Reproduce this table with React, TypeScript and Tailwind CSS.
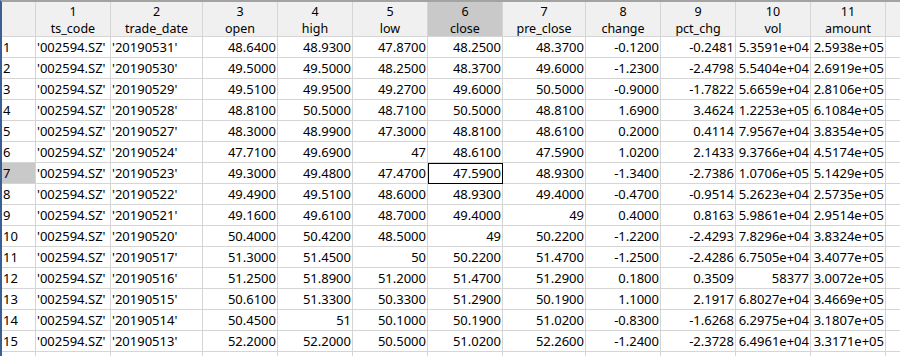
const columns = [
  { n: "1", name: "ts_code", w: "w-[75px]" },
  { n: "2", name: "trade_date", w: "w-[92px]" },
  { n: "3", name: "open", w: "w-[75px]" },
  { n: "4", name: "high", w: "w-[75px]" },
  { n: "5", name: "low", w: "w-[75px]" },
  { n: "6", name: "close", w: "w-[75px]" },
  { n: "7", name: "pre_close", w: "w-[83px]" },
  { n: "8", name: "change", w: "w-[75px]" },
  { n: "9", name: "pct_chg", w: "w-[75px]" },
  { n: "10", name: "vol", w: "w-[75px]" },
  { n: "11", name: "amount", w: "w-[75px]" },
];

const rows: string[][] = [
  ["'20190531'", "48.6400", "48.9300", "47.8700", "48.2500", "48.3700", "-0.1200", "-0.2481", "5.3591e+04", "2.5938e+05"],
  ["'20190530'", "49.5000", "49.5000", "48.2500", "48.3700", "49.6000", "-1.2300", "-2.4798", "5.5404e+04", "2.6919e+05"],
  ["'20190529'", "49.5100", "49.9500", "49.2700", "49.6000", "50.5000", "-0.9000", "-1.7822", "5.6659e+04", "2.8106e+05"],
  ["'20190528'", "48.8100", "50.5000", "48.7100", "50.5000", "48.8100", "1.6900", "3.4624", "1.2253e+05", "6.1084e+05"],
  ["'20190527'", "48.3000", "48.9900", "47.3000", "48.8100", "48.6100", "0.2000", "0.4114", "7.9567e+04", "3.8354e+05"],
  ["'20190524'", "47.7100", "49.6900", "47", "48.6100", "47.5900", "1.0200", "2.1433", "9.3766e+04", "4.5174e+05"],
  ["'20190523'", "49.3000", "49.4800", "47.4700", "47.5900", "48.9300", "-1.3400", "-2.7386", "1.0706e+05", "5.1429e+05"],
  ["'20190522'", "49.4900", "49.5100", "48.6000", "48.9300", "49.4000", "-0.4700", "-0.9514", "5.2623e+04", "2.5735e+05"],
  ["'20190521'", "49.1600", "49.6100", "48.7000", "49.4000", "49", "0.4000", "0.8163", "5.9861e+04", "2.9514e+05"],
  ["'20190520'", "50.4000", "50.4200", "48.5000", "49", "50.2200", "-1.2200", "-2.4293", "7.8296e+04", "3.8324e+05"],
  ["'20190517'", "51.3000", "51.4500", "50", "50.2200", "51.4700", "-1.2500", "-2.4286", "6.7505e+04", "3.4077e+05"],
  ["'20190516'", "51.2500", "51.8900", "51.2000", "51.4700", "51.2900", "0.1800", "0.3509", "58377", "3.0072e+05"],
  ["'20190515'", "50.6100", "51.3300", "50.3300", "51.2900", "50.1900", "1.1000", "2.1917", "6.8027e+04", "3.4669e+05"],
  ["'20190514'", "50.4500", "51", "50.1000", "50.1900", "51.0200", "-0.8300", "-1.6268", "6.2975e+04", "3.1807e+05"],
  ["'20190513'", "52.2000", "52.2000", "50.5000", "51.0200", "52.2600", "-1.2400", "-2.3728", "6.4961e+04", "3.3171e+05"],
];

const selRow = 6;
const selCol = 5;

function App() {
  return (
    <div
      className="w-[900px] h-[356px] overflow-hidden bg-white border-l-2 border-t-2 border-l-[#3a5f94] border-t-[#a3a3a3] text-[13px] text-black"
      style={{ fontFamily: '"Noto Sans", "Liberation Sans", sans-serif' }}
    >
      {/* header */}
      <div className="flex h-[35px] bg-[#f0f0f0]">
        <div className="w-[34px] shrink-0 border-r border-b border-[#d5d5d5]" />
        {columns.map((c, i) => (
          <div
            key={c.n}
            className={`${c.w} shrink-0 border-r border-b border-[#d5d5d5] pt-[1px] text-center text-[12.5px] leading-[17px] ${
              i === selCol ? "bg-[#c9c9c9]" : ""
            }`}
          >
            <div>{c.n}</div>
            <div>{c.name}</div>
          </div>
        ))}
        <div className="w-[60px] shrink-0 border-b border-[#d5d5d5]" />
      </div>

      {/* rows */}
      {[...rows, null].map((r, ri) => (
        <div key={ri} className="flex h-[21px] leading-[20px]">
          <div
            className={`w-[34px] shrink-0 border-r border-b border-[#d5d5d5] pl-[1px] ${
              ri === selRow ? "bg-[#c9c9c9]" : ""
            }`}
          >
            {r ? ri + 1 : ""}
          </div>
          <div className={`${columns[0].w} shrink-0 border-r border-b border-[#d5d5d5] pl-[1px]`}>
            {r ? "'002594.SZ'" : ""}
          </div>
          {columns.slice(1).map((c, ci) => (
            <div
              key={c.n}
              className={`${c.w} shrink-0 border-r border-b border-[#d5d5d5] whitespace-nowrap ${
                ci === 0 ? "pl-[1px] text-left" : "pr-[1px] text-right"
              } ${ri === selRow && ci + 1 === selCol ? "outline outline-1 outline-black -outline-offset-1" : ""}`}
            >
              {r ? r[ci] : ""}
            </div>
          ))}
          <div className="w-[60px] shrink-0 border-b border-[#d5d5d5]" />
        </div>
      ))}
    </div>
  );
}

export default App;
